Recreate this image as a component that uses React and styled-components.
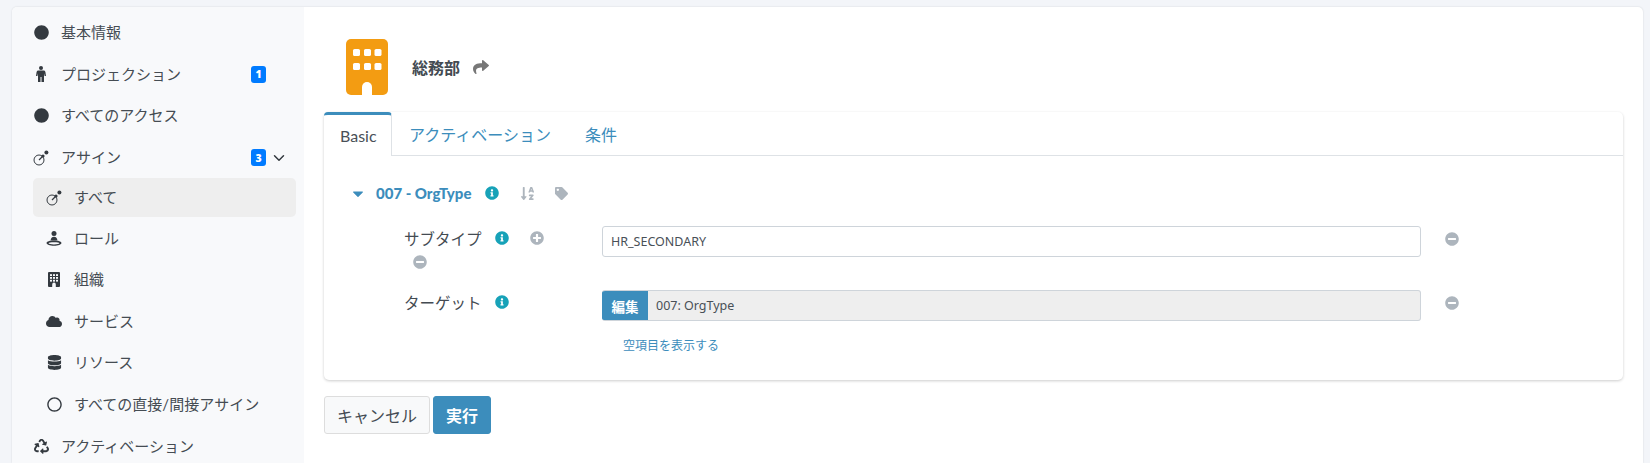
import React from "react";
import styled, { createGlobalStyle } from "styled-components";
import { FaCircle, FaCloud, FaDatabase, FaRegCircle, FaRecycle, FaShare, FaCaretDown, FaInfoCircle, FaSortAlphaDown, FaTag, FaPlusCircle, FaMinusCircle } from "react-icons/fa";
import { ChevronDown } from "lucide-react";

const Global = createGlobalStyle`
  html, body { margin: 0; height: 463px; overflow: hidden; background: #f3f5f9; }
  body { font-family: Lato, "Noto Sans CJK JP", sans-serif; color: #444b52; }
  * { box-sizing: border-box; }
`;
const Shell = styled.div`
  margin: 7px 7px 0 12px; height: 456px; display: flex; overflow: hidden;
  background: #fff; border-radius: 5px 5px 0 0; box-shadow: 0 0 2px rgba(0,0,0,.14);
`;
const Sidebar = styled.nav`
  width: 292px; flex: none; background: #f8f9fb; padding: 5px 8px 0 9px; display: flex; flex-direction: column;
`;
const NavItem = styled.div`
  flex: none;
  height: ${p => p.$active ? "39px" : "41.6px"};
  display: flex; align-items: center; font-size: 15px; color: #454c53; border-radius: 5px;
  padding-left: ${p => p.$sub ? "13px" : "12px"};
  margin-left: ${p => p.$sub ? "12px" : "0"};
  background: ${p => p.$active ? "#eeeeee" : "transparent"};
`;
const NavIcon = styled.span`
  width: 16px; flex: none; margin-right: 12px; display: flex; justify-content: center; color: #343a40; font-size: ${p => p.$size || 15}px;
`;
const NavLabel = styled.span`flex: 1; line-height: 1;`;
const Badge = styled.span`
  width: 15px; height: 17px; background: #007bff; color: #fff; border-radius: 3px; font-size: 10.5px; font-weight: 800;
  display: flex; align-items: center; justify-content: center; margin-right: ${p => p.$mr}px; font-family: "Open Sans", sans-serif;
`;
const Chevron = styled(ChevronDown)`width: 18px; height: 18px; color: #343a40; margin-right: 8px; margin-left: 4px;`;

const Main = styled.main`flex: 1; padding: 32px 20px 0 20px; min-width: 0;`;
const Head = styled.header`display: flex; align-items: center; height: 56px; margin-bottom: 17px; padding-left: 22px;`;
const OrgLogo = styled.svg`width: 42px; height: 56px; flex: none; margin-right: 24px;`;
const Title = styled.h1`margin: 0 13px 0 0; font-size: 16px; font-weight: 700; color: #444b52;`;
const ShareIcon = styled(FaShare)`font-size: 16px; color: #777;`;

const Card = styled.section`
  height: 268px; border-radius: 5px; background: #fff; box-shadow: 0 1px 3px rgba(0,0,0,.2); 
`;
const Tabs = styled.div`display: flex; height: 44px; border-bottom: 1px solid #dee2e6;`;
const Tab = styled.div`
  height: ${p => p.$active ? "44px" : "43px"}; padding: 0 ${p => p.$active ? "16px" : "17px"}; display: flex; align-items: center; font-size: 16px;
  color: ${p => p.$active ? "#495057" : "#3c8dbc"}; background: #fff;
  ${p => p.$active ? "width: 68px; border-top: 3px solid #3c8dbc; border-right: 1px solid #dee2e6; border-radius: 4px 4px 0 0;" : ""}
`;
const Body = styled.div`padding: 26px 0 0 28px;`;
const Group = styled.div`display: flex; align-items: center; height: 22px; margin-bottom: 22px; color: #3c8dbc;`;
const Caret = styled(FaCaretDown)`font-size: 17px; margin-right: 12px; width: 12px;`;
const GroupTitle = styled.strong`font-size: 15px; font-weight: 900; margin-right: 14px;`;
const Info = styled(FaInfoCircle)`font-size: 14px; color: #17a2b8; flex: none;`;
const Muted = styled.span`color: #adb5bd; font-size: ${p => p.$size || 14}px; display: flex; margin-left: ${p => p.$ml}px;`;

const Row = styled.div`
  display: grid; grid-template-columns: 198px 819px auto; padding-left: 52px; margin-bottom: ${p => p.$mb}px;
`;
const LabelCell = styled.div`display: flex; flex-wrap: wrap; align-items: center; align-content: flex-start; font-size: 15.5px; color: #444b52; width: 160px; row-gap: 5px;`;
const LabelLine = styled.div`display: flex; align-items: center; height: 24px; width: 100%;`;
const LabelText = styled.span`margin-right: 13px;`;
const Input = styled.div`
  height: 31px; border: 1px solid #ced4da; border-radius: 3px; padding-left: 8px; display: flex; align-items: center; font-family: "Noto Sans", sans-serif; font-size: 12.5px; color: #495057; background: #fff;
`;
const RefBox = styled.div`
  height: 31px; border: 1px solid #ced4da; border-left: 0; border-radius: 3px; display: flex; align-items: center; font-family: "Noto Sans", "Noto Sans CJK JP", sans-serif; font-size: 12.5px; color: #495057; background: #eeeeee; overflow: hidden;
`;
const EditBtn = styled.span`
  height: 31px; width: 46px; background: #3c8dbc; color: #fff; font-weight: 700; font-size: 13.5px; display: flex; align-items: center; justify-content: center; margin-right: 8px;
`;
const RowEnd = styled.div`padding-left: 24px; height: 25px; display: flex; align-items: center; color: #adb5bd; font-size: 14px;`;
const Link = styled.a`display: block; margin-left: 271px; font-size: 12px; color: #3c8dbc; line-height: 16px;`;
const Actions = styled.div`display: flex; gap: 3px; margin-top: 16px;`;
const Btn = styled.button`
  height: 38px; padding: 0 12px; border-radius: 3px; font: inherit; font-size: 16px; font-weight: ${p => p.$primary ? 700 : 400};
  ${p => p.$primary ? "background:#3c8dbc;color:#fff;border:1px solid #3c8dbc;" : "background:#f8f9fa;color:#444b52;border:1px solid #ddd;"}
`;

const PersonIcon = () => (
  <svg width="10" height="16" viewBox="0 0 10 16" fill="#343a40">
    <circle cx="5" cy="2" r="2" />
    <path d="M2.4 4.6H7.6C8.6 4.6 9.2 5.2 9.4 6.1L10 10H8.6L8 7.2V16H5.5V11H4.5V16H2V7.2L1.4 10H0L.6 6.1C.8 5.2 1.4 4.6 2.4 4.6Z" />
  </svg>
);
const AssignIcon = () => (
  <svg width="16" height="16" viewBox="0 0 16 16" fill="none" stroke="#343a40">
    <circle cx="6" cy="10" r="5" strokeWidth="1" />
    <path d="M6 10 L10.5 5.5" strokeWidth="1.2" />
    <circle cx="13.4" cy="2.4" r="2" fill="#343a40" stroke="none" />
    <circle cx="10" cy="6" r="1.6" fill="#343a40" stroke="none" />
  </svg>
);
const RoleIcon = () => (
  <svg width="16" height="15" viewBox="0 0 16 15" fill="#343a40">
    <circle cx="8" cy="2.5" r="2.5" />
    <path d="M4.6 9.6C4.6 7.1 6 5.8 8 5.8s3.4 1.3 3.4 3.8Z" />
    <path fillRule="evenodd" d="M8 9.5C12 9.5 15.5 10.4 15.5 12S12 14.8 8 14.8.5 13.6.5 12 4 9.5 8 9.5ZM8 11.2C5 11.2 2.6 11.5 2.6 12.2S5 13.4 8 13.4 13.4 12.9 13.4 12.2 11 11.2 8 11.2Z" />
  </svg>
);
const BuildingIcon = () => (
  <svg width="12" height="15" viewBox="0 0 12 15">
    <rect width="12" height="15" rx="1" fill="#343a40" />
    {[2, 5, 8].map(x => [2.2, 5, 7.8].map(y => <rect key={x + "-" + y} x={x} y={y} width="2" height="1.8" fill="#f8f9fb" />))}
    <path d="M4.2 15V12.4a1.8 1.8 0 0 1 3.6 0V15Z" fill="#f8f9fb" />
  </svg>
);

const Nav = ({ icon, size, label, badge, chevron, sub, active }) => (
  <NavItem $sub={sub} $active={active}>
    <NavIcon $size={size}>{icon}</NavIcon>
    <NavLabel>{label}</NavLabel>
    {badge && <Badge $mr={chevron ? 0 : 30}>{badge}</Badge>}
    {chevron && <Chevron />}
  </NavItem>
);

export default function App() {
  return (
    <>
      <Global />
      <Shell>
        <Sidebar>
          <Nav icon={<FaCircle />} label="基本情報" />
          <Nav icon={<PersonIcon />} label="プロジェクション" badge="1" />
          <Nav icon={<FaCircle />} label="すべてのアクセス" />
          <Nav icon={<AssignIcon />} label="アサイン" badge="3" chevron />
          <Nav sub active icon={<AssignIcon />} label="すべて" />
          <Nav sub icon={<RoleIcon />} label="ロール" />
          <Nav sub icon={<BuildingIcon />} label="組織" />
          <Nav sub icon={<FaCloud />} size={21} label="サービス" />
          <Nav sub icon={<FaDatabase />} size={15} label="リソース" />
          <Nav sub icon={<FaRegCircle />} label="すべての直接/間接アサイン" />
          <Nav icon={<FaRecycle />} label="アクティベーション" />
        </Sidebar>
        <Main>
          <Head>
            <OrgLogo viewBox="0 0 42 56">
              <rect width="42" height="56" rx="5" fill="#f39c12" />
              {[7, 18, 28.5].map(x => [10, 24].map(y => <rect key={x + "-" + y} x={x} y={y} width="7" height="7" rx="1.6" fill="#fff" />))}
              <path d="M16 56V48a5 5 0 0 1 10 0V56Z" fill="#fff" />
            </OrgLogo>
            <Title>総務部</Title>
            <ShareIcon />
          </Head>
          <Card>
            <Tabs>
              <Tab $active>Basic</Tab>
              <Tab>アクティベーション</Tab>
              <Tab>条件</Tab>
            </Tabs>
            <Body>
              <Group>
                <Caret />
                <GroupTitle>007 - OrgType</GroupTitle>
                <Info />
                <Muted $ml={21} $size={15}><FaSortAlphaDown /></Muted>
                <Muted $ml={20} $size={13}><FaTag /></Muted>
              </Group>
              <Row $mb={21}>
                <LabelCell>
                  <LabelLine>
                    <LabelText>サブタイプ</LabelText>
                    <Info />
                    <Muted $ml={21}><FaPlusCircle /></Muted>
                  </LabelLine>
                  <Muted $ml={9}><FaMinusCircle /></Muted>
                </LabelCell>
                <Input>HR_SECONDARY</Input>
                <RowEnd><FaMinusCircle /></RowEnd>
              </Row>
              <Row $mb={17}>
                <LabelCell>
                  <LabelLine>
                    <LabelText>ターゲット</LabelText>
                    <Info />
                  </LabelLine>
                </LabelCell>
                <RefBox><EditBtn>編集</EditBtn>007: OrgType</RefBox>
                <RowEnd><FaMinusCircle /></RowEnd>
              </Row>
              <Link>空項目を表示する</Link>
            </Body>
          </Card>
          <Actions>
            <Btn>キャンセル</Btn>
            <Btn $primary>実行</Btn>
          </Actions>
        </Main>
      </Shell>
    </>
  );
}
